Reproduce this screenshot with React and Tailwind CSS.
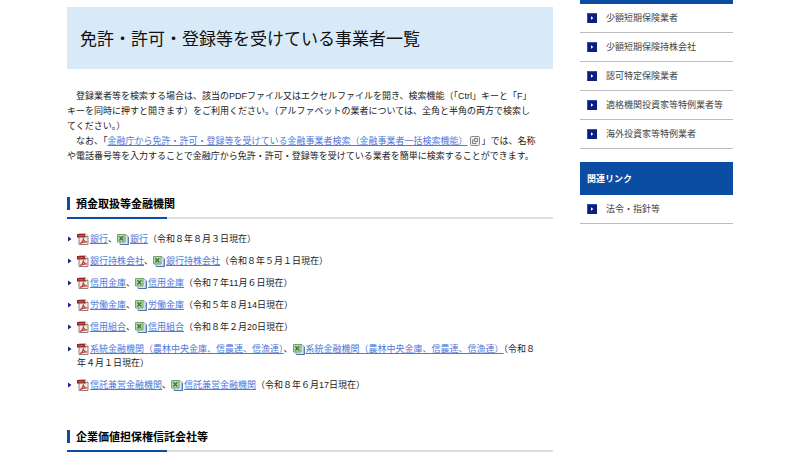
import React from 'react';

const institutions = [
  { name: '銀行', date: '（令和８年８月３日現在）' },
  { name: '銀行持株会社', date: '（令和８年５月１日現在）' },
  { name: '信用金庫', date: '（令和７年11月６日現在）' },
  { name: '労働金庫', date: '（令和５年８月14日現在）' },
  { name: '信用組合', date: '（令和８年２月20日現在）' },
  { name: '系統金融機関（農林中央金庫、信農連、信漁連）', date: '（令和８', rest: '年４月１日現在）' },
  { name: '信託兼営金融機関', date: '（令和８年６月17日現在）' },
];

const sideLinks = [
  '少額短期保険業者',
  '少額短期保険持株会社',
  '認可特定保険業者',
  '適格機関投資家等特例業者等',
  '海外投資家等特例業者',
];

function PdfIcon() {
  return (
    <svg viewBox="0 0 12 12" className="inline-block size-3 mr-px align-[-3px]" aria-hidden="true">
      <path d="M2 1h6.500l2.500 2.500v8H2z" fill="#f3e9e7" stroke="#8f7f7c" />
      <path d="M0 1h8l1 1v2.500H0z" fill="#96231f" />
      <path d="M8 .5V3.500h3" fill="#fff" stroke="#776a68" strokeWidth=".8" />
      <path d="M1.500 2.800h5" stroke="#d59a95" strokeWidth=".7" />
      <path d="M3 10.500c2-1 3.300-3.200 3.300-5.300 0 2.300 1.500 3.900 4 3.800-2.500-.5-5 .2-7.300 1.500z" fill="none" stroke="#c23d37" strokeWidth="1.100" />
    </svg>
  );
}

function ExcelIcon() {
  return (
    <svg viewBox="0 0 12 12" className="inline-block size-3 mr-px align-[-3px]" aria-hidden="true">
      <path d="M3 1.500h6l2.300 2.300v7.700H3z" fill="#d4e3f7" stroke="#7d97c2" />
      <path d="M11.300 4v7.500H3.500" fill="none" stroke="#4d6ea6" />
      <path d="M.5 1.500h7.500v7.500H.5z" fill="#b9d8ae" stroke="#76a56a" />
      <path d="M2.300 3.200l4 4.200M6.300 3.200l-4 4.200" stroke="#3a7d38" strokeWidth="1.500" />
    </svg>
  );
}

function ExternalIcon() {
  return (
    <svg viewBox="0 0 10 10" className="mx-0.5 inline-block size-[10px] align-[-2px]" fill="none" aria-hidden="true">
      <rect x=".5" y=".5" width="9" height="9" rx="1" stroke="#8a8a8a" fill="#ececec" />
      <path d="M4 4H2.500v3.500H6V6.500" stroke="#777" strokeWidth=".9" />
      <path d="M4.500 2.500H7.500v3H4.500z" stroke="#777" strokeWidth=".9" />
    </svg>
  );
}

function ArrowIcon() {
  return (
    <svg viewBox="0 0 10 10" className="size-[10px] shrink-0" aria-hidden="true">
      <rect width="10" height="10" fill="#0c1f80" />
      <path d="M.5 10V.5H10" fill="none" stroke="#2f4fa8" />
      <path d="M4 3.200L6.300 5 4 6.800z" fill="#fff" />
    </svg>
  );
}

function TextLink({ children }) {
  return <a href="#" className="text-[#5078d8] underline underline-offset-1">{children}</a>;
}

function SectionHeading({ children }) {
  return (
    <div>
      <h2 className="border-l-3 border-[#0b4da2] pl-1.5 text-[11px] leading-[13px] font-bold text-black">{children}</h2>
      <div className="mt-[7px] flex h-0.5 bg-[#dedede]">
        <span className="w-[100px] bg-[#0b4da2]" />
      </div>
    </div>
  );
}

function SideItem({ label }) {
  return (
    <li className="border-b border-[#bdbdbd]">
      <a href="#" className="flex h-7 items-center gap-[9px] pl-[7px] text-[#444] whitespace-nowrap">
        <ArrowIcon />
        {label}
      </a>
    </li>
  );
}

export default function App() {
  return (
    <div className="flex items-start gap-[27px] bg-white px-[67px] text-[9px] text-[#222] font-['Noto_Sans_CJK_JP',sans-serif]">
      <main className="min-w-0 flex-1 pt-[7px]">
        <h1 className="bg-[#d8e9f8] px-[13px] py-[18px] text-[17px] leading-[26px] text-[#111]">
          免許・許可・登録等を受けている事業者一覧
        </h1>

        <p className="mt-5 leading-[15px] font-['Liberation_Sans','Noto_Sans_CJK_JP',sans-serif]">
          {'\u3000'}登録業者等を検索する場合は、該当のPDFファイル又はエクセルファイルを開き、検索機能（「Ctrl」キーと「F」
          <br />
          キーを同時に押すと開きます）をご利用ください。（アルファベットの業者については、全角と半角の両方で検索し
          <br />
          てください。）
          <br />
          {'\u3000'}なお、「<TextLink>金融庁から免許・許可・登録等を受けている金融事業者検索（金融事業者一括検索機能）</TextLink>
          <ExternalIcon />」では、名称
          <br />
          や電話番号等を入力することで金融庁から免許・許可・登録等を受けている業者を簡単に検索することができます。
        </p>

        <section className="mt-[33px]">
          <SectionHeading>預金取扱等金融機関</SectionHeading>
          <ul className="mt-[13px] flex flex-col gap-2 leading-[14px] font-['Liberation_Sans','Noto_Sans_CJK_JP',sans-serif]">
            {institutions.map((item) => (
              <li key={item.name} className="flex gap-[5px] pl-px">
                <svg viewBox="0 0 4 14" className="h-[14px] w-1 shrink-0" aria-hidden="true">
                  <path d="M0 4.500L3.500 7 0 9.500z" fill="#16208a" />
                </svg>
                <div>
                  <PdfIcon />
                  <TextLink>{item.name}</TextLink>、
                  <ExcelIcon />
                  <TextLink>{item.name}</TextLink>
                  {item.date}
                  {item.rest && <><br />{item.rest}</>}
                </div>
              </li>
            ))}
          </ul>
        </section>

        <section className="mt-[38px]">
          <SectionHeading>企業価値担保権信託会社等</SectionHeading>
        </section>
      </main>

      <aside className="w-[153px] shrink-0">
        <div className="h-1 bg-[#0b4da2]" />
        <ul>
          {sideLinks.map((label) => <SideItem key={label} label={label} />)}
        </ul>
        <h2 className="mt-[13px] bg-[#0b4da2] px-[7px] leading-[33px] font-bold text-white">関連リンク</h2>
        <ul>
          <SideItem label="法令・指針等" />
        </ul>
      </aside>
    </div>
  );
}
